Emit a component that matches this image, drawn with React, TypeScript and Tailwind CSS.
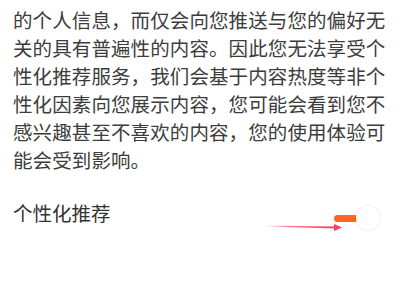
import React from "react";

const paragraph =
  "的个人信息，而仅会向您推送与您的偏好无关的具有普遍性的内容。因此您无法享受个性化推荐服务，我们会基于内容热度等非个性化因素向您展示内容，您可能会看到您不感兴趣甚至不喜欢的内容，您的使用体验可能会受到影响。";

const Toggle = () => (
  <div className="relative w-[46px] h-[24px] flex items-center">
    {/* track (shrunk, orange) */}
    <div className="ml-0 w-[24px] h-[7px] rounded-full bg-[#ff6622]" />
    {/* knob */}
    <div className="absolute right-0 top-0 w-[24px] h-[24px] rounded-full bg-white shadow-[0_0_3px_rgba(0,0,0,0.12)]" />
  </div>
);

const Arrow = () => (
  <svg
    className="absolute left-[262px] top-[220px]"
    width="84"
    height="14"
    viewBox="0 0 84 14"
  >
    <defs>
      <linearGradient id="arrowFade" x1="0" y1="0" x2="1" y2="0">
        <stop offset="0" stopColor="#ff4d6a" stopOpacity="0" />
        <stop offset="0.35" stopColor="#ff4d6a" stopOpacity="0.75" />
        <stop offset="1" stopColor="#ff3d5a" stopOpacity="1" />
      </linearGradient>
    </defs>
    <polygon points="3,5.4 74,6.6 74,8.6 3,6.6" fill="url(#arrowFade)" />
    <polygon points="72,4 80,7.6 72,11" fill="#ff3d5a" />
  </svg>
);

export default function App() {
  return (
    <div
      className="relative w-[400px] h-[294px] bg-white overflow-hidden"
      style={{ fontFamily: '"Noto Sans CJK SC", "Noto Sans", sans-serif' }}
    >
      <div className="px-[13px] pt-[6px]">
        <p className="text-[19.5px] leading-[28px] text-[#3c3c3c] tracking-[0.1px]">
          {paragraph}
        </p>

        <div className="mt-[25px] flex justify-between items-start pr-[7px]">
          <h2 className="text-[19.5px] leading-[28px] text-[#333333]">
            个性化推荐
          </h2>
          <div className="mt-[7px]">
            <Toggle />
          </div>
        </div>
      </div>

      <Arrow />
    </div>
  );
}
